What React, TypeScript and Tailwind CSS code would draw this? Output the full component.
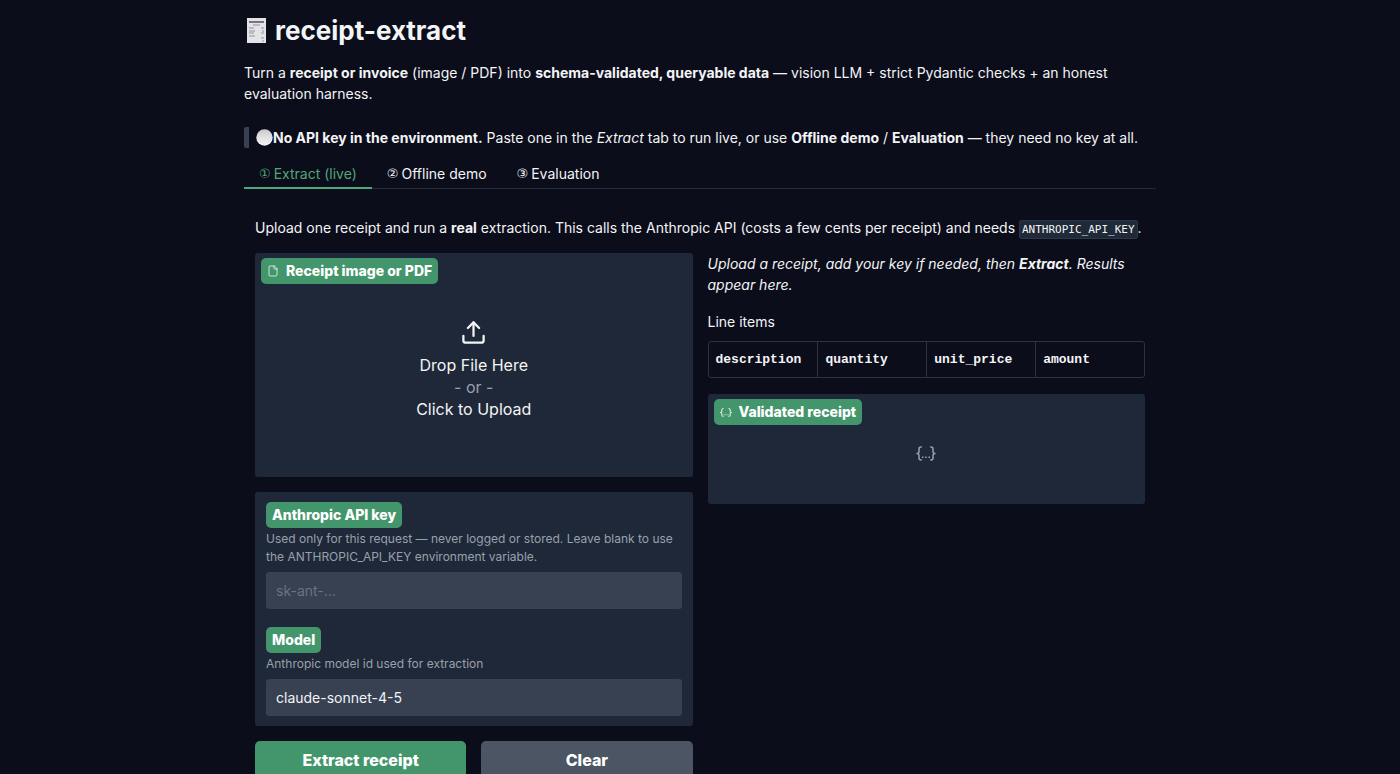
import { useState, type ReactNode } from 'react'
import { File, Upload } from 'lucide-react'
import clsx from 'clsx'

const TABS = [
  { id: 'extract', mark: '①', label: 'Extract (live)' },
  { id: 'demo', mark: '②', label: 'Offline demo' },
  { id: 'evaluation', mark: '③', label: 'Evaluation' },
]

const COLUMNS = ['description', 'quantity', 'unit_price', 'amount']

function ReceiptIcon() {
  return (
    <svg width="24" height="26" viewBox="0 0 24 26" aria-hidden="true">
      <path d="M3 0h19v25H3z" fill="#e4e4e8" />
      <path d="M5 3h15v2H5z" fill="#77777f" />
      <path
        d="M9 7h7M5 10h5M5 13h6M5 15h5M5 18h6M17 10h3M18 13h2M17 15h3M17 20h3M18 23h2"
        stroke="#92929b"
        strokeWidth="1"
      />
    </svg>
  )
}

function CircleIcon() {
  return (
    <svg width="17" height="17" viewBox="0 0 17 17" className="inline-block align-[-3px]" aria-hidden="true">
      <defs>
        <linearGradient id="circle" x1="0" y1="0" x2="0" y2="1">
          <stop offset="0" stopColor="#c9c9cc" />
          <stop offset="0.5" stopColor="#e2e2e4" />
          <stop offset="1" stopColor="#f3f3f3" />
        </linearGradient>
      </defs>
      <circle cx="8.5" cy="8.5" r="8.2" fill="url(#circle)" />
    </svg>
  )
}

function JsonIcon({ className }: { className?: string }) {
  return (
    <svg viewBox="0 0 20 15" fill="none" stroke="currentColor" strokeWidth="1.5" className={className} aria-hidden="true">
      <path d="M5.8 1H5a2 2 0 0 0-2 2v2.5a2 2 0 0 1-2.4 2 2 2 0 0 1 2.4 2V12a2 2 0 0 0 2 2h.8" />
      <path d="M14.2 1h.8a2 2 0 0 1 2 2v2.5a2 2 0 0 0 2.4 2 2 2 0 0 0-2.4 2V12a2 2 0 0 1-2 2h-.8" />
      <path d="M6 11.3h1.5M9.2 11.3h1.5M12.5 11.3H14" />
    </svg>
  )
}

const badge = 'inline-flex items-center h-[26px] rounded-[5px] bg-[#43966b] px-[6px] text-sm font-extrabold text-white'

function BlockTitle({ icon, children }: { icon: ReactNode; children: ReactNode }) {
  return (
    <div className={clsx(badge, 'self-start')}>
      <span className="mr-[7px] flex w-3 justify-center">{icon}</span>
      <h2>{children}</h2>
    </div>
  )
}

interface FieldProps {
  id: string
  label: string
  info: string
  type?: string
  value: string
  placeholder?: string
  onChange: (value: string) => void
}

function Field({ id, label, info, type = 'text', value, placeholder, onChange }: FieldProps) {
  return (
    <div className="flex flex-col items-start">
      <label htmlFor={id} className={badge}>
        {label}
      </label>
      <p id={`${id}-info`} className="mt-[2px] text-xs leading-[18px] text-[#99a0ad]">
        {info}
      </p>
      <input
        id={id}
        type={type}
        value={value}
        placeholder={placeholder}
        aria-describedby={`${id}-info`}
        onChange={(e) => onChange(e.target.value)}
        className="mt-[6px] h-[37px] w-full rounded-[3px] bg-[#374151] px-[10px] text-sm text-gray-100 outline-none placeholder:text-[#6b7280]"
      />
    </div>
  )
}

export default function App() {
  const [tab, setTab] = useState('extract')
  const [apiKey, setApiKey] = useState('')
  const [model, setModel] = useState('claude-sonnet-4-5')

  const clear = () => {
    setApiKey('')
    setModel('claude-sonnet-4-5')
  }

  return (
    <div className="min-h-screen bg-[#0b0d1a] font-[Inter,sans-serif] text-sm leading-[21px] text-gray-100">
      <main className="mx-auto w-full max-w-[912px] pt-4 pb-8">
        <h1 className="flex items-center gap-[7px] text-[26px] leading-[30px] font-bold">
          <ReceiptIcon />
          receipt-extract
        </h1>
        <p className="mt-4 text-sm leading-[21px]">
          Turn a <strong>receipt or invoice</strong> (image / PDF) into{' '}
          <strong>schema-validated, queryable data</strong> — vision LLM + strict Pydantic checks + an honest
          evaluation harness.
        </p>
        <blockquote className="mt-[23px] rounded-l-[2px] border-l-[5px] border-[#374151] pl-[7px]">
          <CircleIcon />
          <strong>No API key in the environment.</strong> Paste one in the <em>Extract</em> tab to run live, or use{' '}
          <strong>Offline demo</strong> / <strong>Evaluation</strong> — they need no key at all.
        </blockquote>

        <div role="tablist" className="mt-3 flex h-[29px] border-b border-[#252a38]">
          {TABS.map((t) => (
            <button
              key={t.id}
              role="tab"
              aria-selected={tab === t.id}
              onClick={() => setTab(t.id)}
              className={clsx(
                '-mb-px flex items-center gap-[3px] border-b-2 px-[15px]',
                tab === t.id ? 'border-[#52a578] text-[#52a578]' : 'border-transparent'
              )}
            >
              <span className="font-['DejaVu_Sans',sans-serif] text-[13px]">{t.mark}</span>
              {t.label}
            </button>
          ))}
        </div>

        <div role="tabpanel" className="px-[11px] pt-7">
          <p>
            Upload one receipt and run a <strong>real</strong> extraction. This calls the Anthropic API (costs a few
            cents per receipt) and needs{' '}
            <code className="rounded-[3px] border border-[#2d3748] bg-[#1f2937] px-[2px] py-[2px] font-['DejaVu_Sans_Mono',monospace] text-[11px] leading-none">
              ANTHROPIC_API_KEY
            </code>
            .
          </p>

          <div className="mt-[15px] grid grid-cols-1 items-start gap-[15px] md:grid-cols-2">
            <div className="flex flex-col gap-[15px]">
              <section className="flex h-[224px] flex-col rounded-[3px] bg-[#1f2838] px-[6px] py-[5px]">
                <BlockTitle icon={<File size={12} strokeWidth={1.5} />}>Receipt image or PDF</BlockTitle>
                <button className="mb-5 flex flex-1 flex-col items-center justify-end pb-8 text-base leading-[22px]">
                  <Upload size={27} strokeWidth={2} className="mb-2" />
                  <span>Drop File Here</span>
                  <span className="text-[#99a0ad]">- or -</span>
                  <span>Click to Upload</span>
                </button>
              </section>

              <section className="flex flex-col gap-[18px] rounded-[3px] bg-[#1f2838] px-[11px] py-[10px]">
                <Field
                  id="api-key"
                  label="Anthropic API key"
                  info="Used only for this request — never logged or stored. Leave blank to use the ANTHROPIC_API_KEY environment variable."
                  type="password"
                  value={apiKey}
                  placeholder="sk-ant-..."
                  onChange={setApiKey}
                />
                <Field
                  id="model"
                  label="Model"
                  info="Anthropic model id used for extraction"
                  value={model}
                  onChange={setModel}
                />
              </section>

              <div className="grid grid-cols-2 gap-[15px]">
                <button className="h-[38px] rounded-[5px] bg-[#43966b] text-base font-extrabold text-white">
                  Extract receipt
                </button>
                <button
                  onClick={clear}
                  className="h-[38px] rounded-[5px] bg-[#4b5563] text-base font-extrabold text-white"
                >
                  Clear
                </button>
              </div>
            </div>

            <div className="flex flex-col gap-4">
              <p className="italic">
                Upload a receipt, add your key if needed, then <strong>Extract</strong>. Results appear here.
              </p>

              <table className="w-full table-fixed border-separate border-spacing-0 rounded-[3px] border border-[#2d3240] text-left">
                <caption className="pb-[9px] text-left">Line items</caption>
                <thead>
                  <tr>
                    {COLUMNS.map((c) => (
                      <th
                        key={c}
                        className="h-[35px] border-l border-[#2d3240] px-[7px] font-['Liberation_Mono',monospace] text-[13px] font-bold first:border-l-0"
                      >
                        {c}
                      </th>
                    ))}
                  </tr>
                </thead>
              </table>

              <section className="flex h-[110px] flex-col rounded-[3px] bg-[#1f2838] px-[6px] py-[5px]">
                <BlockTitle icon={<JsonIcon className="w-3" />}>Validated receipt</BlockTitle>
                <div className="flex flex-1 justify-center pt-[21px] text-[#99a0ad]">
                  <JsonIcon className="h-[15px] w-5" />
                </div>
              </section>
            </div>
          </div>
        </div>
      </main>
    </div>
  )
}
